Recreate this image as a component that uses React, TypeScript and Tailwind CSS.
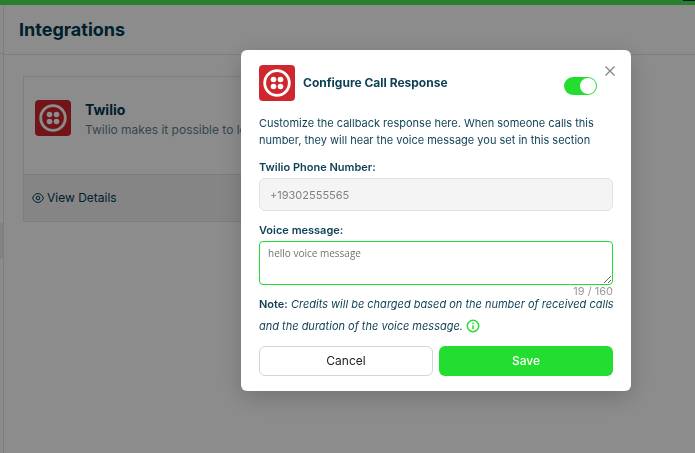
import { useState } from 'react';
import type { ReactNode } from 'react';

const MAX_MESSAGE_LENGTH = 160;
const INITIAL_COUNT = 19;
const INITIAL_MESSAGE = 'hello voice message';

function TwilioLogo() {
  return (
    <svg viewBox="0 0 36 36" className="size-9 shrink-0" aria-hidden="true">
      <rect width="36" height="36" rx="4" fill="#cf272d" />
      <circle cx="18" cy="18" r="12.300" fill="none" stroke="#fff" strokeWidth="2.800" />
      <circle cx="14.500" cy="14.500" r="2.800" fill="#fff" />
      <circle cx="21.500" cy="14.500" r="2.800" fill="#fff" />
      <circle cx="14.500" cy="21.500" r="2.800" fill="#fff" />
      <circle cx="21.500" cy="21.500" r="2.800" fill="#fff" />
    </svg>
  );
}

function EyeIcon() {
  return (
    <svg viewBox="0 0 12 12" className="size-3" fill="none" stroke="currentColor" aria-hidden="true">
      <path d="M.6 6C1.8 3 3.600 1.600 6 1.600S10.200 3 11.400 6C10.200 9 8.400 10.400 6 10.400S1.800 9 .6 6Z" />
      <circle cx="6" cy="6" r="1.800" />
    </svg>
  );
}

function InfoIcon() {
  return (
    <svg viewBox="0 0 14 14" className="inline size-3.5 align-text-bottom" aria-hidden="true">
      <circle cx="7" cy="7" r="5.700" fill="none" stroke="#23dd30" strokeWidth="1.500" />
      <circle cx="7" cy="4.300" r=".900" fill="#23dd30" />
      <path d="M7 6.200V10" stroke="#23dd30" strokeWidth="1.500" />
    </svg>
  );
}

function Integrations() {
  return (
    <div className="flex min-h-screen flex-col bg-white">
      <div className="flex h-[5px] justify-end bg-[#4ae755]">
        <div className="h-px w-3 bg-[#0b2c4a]" />
      </div>
      <div className="flex flex-1">
        <aside className="flex w-1 shrink-0 flex-col border-r border-[#e4e4e4]">
          <div className="h-[49px] border-b border-[#e4e4e4]" />
          <div className="mt-[169px] h-9 bg-[#e9efed]" />
        </aside>
        <main className="min-w-0 flex-1">
          <header className="flex h-[50px] items-center border-b border-[#e4e4e4] px-[15px]">
            <h1 className="text-lg font-bold text-[#003a53]">Integrations</h1>
          </header>
          <section className="mx-[19px] mt-[21px] max-w-[400px] border border-[#e4e4e4]">
            <div className="flex h-[97px] gap-3.5 px-[11px] pt-[23px]">
              <TwilioLogo />
              <div>
                <h2 className="text-sm leading-5 font-bold text-[#003a53]">Twilio</h2>
                <p className="text-xs leading-5 text-[#5f7f8d]">Twilio makes it possible to leverage calls</p>
              </div>
            </div>
            <footer className="flex h-[47px] items-center border-t border-[#e4e4e4] bg-[#f3f3f3] px-2">
              <a href="#details" className="flex items-center gap-[3px] text-xs text-[#003a53]">
                <EyeIcon />
                View Details
              </a>
            </footer>
          </section>
        </main>
      </div>
    </div>
  );
}

function FieldLabel({ htmlFor, children }: { htmlFor: string; children: ReactNode }) {
  return (
    <label htmlFor={htmlFor} className="block text-[11px] leading-[22px] font-semibold">
      {children}
    </label>
  );
}

function CallResponseDialog() {
  const [enabled, setEnabled] = useState(true);
  const [message, setMessage] = useState(INITIAL_MESSAGE);
  const count = INITIAL_COUNT + message.length - INITIAL_MESSAGE.length;

  return (
    <div
      role="dialog"
      aria-labelledby="dialog-title"
      className="relative w-[390px] rounded-md bg-white px-[18px] pt-[15px] pb-[15px] text-[#0d3f55] shadow-[0_6px_24px_rgba(0,0,0,0.2)]"
    >
      <button type="button" aria-label="Close" className="absolute top-4 right-4 text-[#808080]">
        <svg viewBox="0 0 10 10" className="size-2.5" stroke="currentColor" strokeWidth="1.200" aria-hidden="true">
          <path d="M.5.5 9.500 9.500M9.500.5.5 9.500" />
        </svg>
      </button>

      <div className="flex items-center gap-2 pr-4">
        <TwilioLogo />
        <h2 id="dialog-title" className="flex-1 text-xs leading-5 font-bold">
          Configure Call Response
        </h2>
        <div className="relative mt-1.5 h-[18px] w-[33px]">
          <input
            type="checkbox"
            role="switch"
            aria-label="Enable call response"
            checked={enabled}
            onChange={(e) => setEnabled(e.target.checked)}
            className="peer block h-full w-full cursor-pointer appearance-none rounded-full bg-gray-300 checked:bg-[#23dd30]"
          />
          <span className="pointer-events-none absolute top-px left-px size-4 rounded-full bg-white peer-checked:left-4" />
        </div>
      </div>

      <p className="mt-3.5 text-[11px] leading-[17px]">
        Customize the callback response here. When someone calls this number, they will hear the voice message you set
        in this section
      </p>

      <div className="mt-[7px]">
        <FieldLabel htmlFor="phone">Twilio Phone Number:</FieldLabel>
        <input
          id="phone"
          disabled
          value="+19302555565"
          className="block h-[33px] w-full rounded-md border border-[#e2e2e2] bg-[#f4f4f4] px-2.5 text-[11px] text-[#808080]"
        />
      </div>

      <div className="mt-2">
        <FieldLabel htmlFor="message">Voice message:</FieldLabel>
        <textarea
          id="message"
          value={message}
          maxLength={MAX_MESSAGE_LENGTH}
          onChange={(e) => setMessage(e.target.value)}
          className="block h-11 w-full resize-y rounded border border-[#23dd30] px-2 py-[3px] font-['Open_Sans',sans-serif] text-[10px] leading-4 text-[#747474] outline-none"
        />
        <div className="h-2 text-right text-[11px] leading-3 text-[#999999]">
          {count} / {MAX_MESSAGE_LENGTH}
        </div>
      </div>

      <p className="-mr-2 text-[11px] leading-[22px] italic">
        <strong className="font-semibold not-italic">Note:</strong> Credits will be charged based on the number of
        received calls and the duration of the voice message. <InfoIcon />
      </p>

      <div className="mt-[9px] grid grid-cols-2 gap-1.5 text-xs">
        <button type="button" className="h-[30px] rounded-md border border-[#d5d5d5] text-[#202020]">
          Cancel
        </button>
        <button type="button" className="h-[30px] rounded-md bg-[#23dd30] font-medium text-white">
          Save
        </button>
      </div>
    </div>
  );
}

export default function App() {
  return (
    <div className="min-h-screen font-['Inter',sans-serif]">
      <Integrations />
      <div className="fixed inset-0 flex items-start justify-center bg-black/45 pt-[50px] pl-[177px]">
        <CallResponseDialog />
      </div>
    </div>
  );
}
